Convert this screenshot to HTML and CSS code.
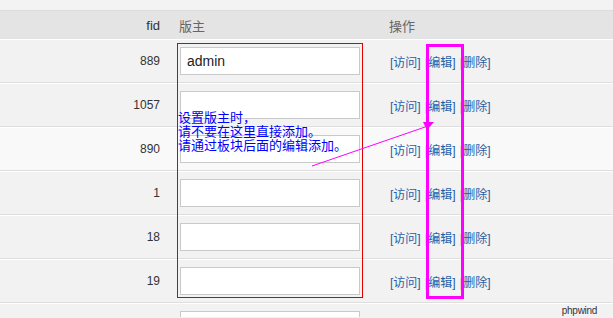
FILE: index.html
```html
<!DOCTYPE html>
<html lang="zh-CN">
<head>
  <meta charset="UTF-8" />
  <title>版主管理</title>
  <link rel="stylesheet" href="styles.css">
</head>
<body>
  <div class="top-band"></div>

  <div class="table">
    <div class="row head">
      <div class="cell num">fid</div>
      <div class="cell">版主</div>
      <div class="cell">操作</div>
    </div>

    <div class="row">
      <div class="cell num">889</div>
      <div class="cell"><input class="text-input" type="text" value="admin"></div>
      <div class="cell ops"><a href="#">[访问]</a> <a href="#">[编辑]</a> <a href="#">[删除]</a></div>
    </div>
    <div class="row">
      <div class="cell num">1057</div>
      <div class="cell"><input class="text-input" type="text"></div>
      <div class="cell ops"><a href="#">[访问]</a> <a href="#">[编辑]</a> <a href="#">[删除]</a></div>
    </div>
    <div class="row hover">
      <div class="cell num">890</div>
      <div class="cell"><input class="text-input" type="text"></div>
      <div class="cell ops"><a href="#">[访问]</a> <a href="#">[编辑]</a> <a href="#">[删除]</a></div>
    </div>
    <div class="row">
      <div class="cell num">1</div>
      <div class="cell"><input class="text-input" type="text"></div>
      <div class="cell ops"><a href="#">[访问]</a> <a href="#">[编辑]</a> <a href="#">[删除]</a></div>
    </div>
    <div class="row">
      <div class="cell num">18</div>
      <div class="cell"><input class="text-input" type="text"></div>
      <div class="cell ops"><a href="#">[访问]</a> <a href="#">[编辑]</a> <a href="#">[删除]</a></div>
    </div>
    <div class="row">
      <div class="cell num">19</div>
      <div class="cell"><input class="text-input" type="text"></div>
      <div class="cell ops"><a href="#">[访问]</a> <a href="#">[编辑]</a> <a href="#">[删除]</a></div>
    </div>
    <!-- next row, only its top edge is in view -->
    <div class="row partial">
      <div class="cell num"></div>
      <div class="cell"><input class="text-input" type="text"></div>
      <div class="cell"></div>
    </div>
  </div>

  <!-- annotations drawn over the screenshot -->
  <div class="mark-red"></div>
  <div class="mark-pink"></div>
  <div class="note">设置版主时，<br>请不要在这里直接添加。<br>请通过板块后面的编辑添加。</div>
  <svg class="arrow" width="613" height="318" viewBox="0 0 613 318">
    <line x1="312" y1="166" x2="428" y2="126" stroke="#ff00ff" stroke-width="1" />
    <polygon points="423,122 434,122 427,130" fill="#ff00ff" />
  </svg>
  <div class="watermark">phpwind</div>
</body>
</html>
```

FILE: styles.css
```css
* {
  margin: 0;
  padding: 0;
  box-sizing: border-box;
}

body {
  font-family: "Liberation Sans", Arial, "Noto Sans CJK SC", sans-serif;
  font-size: 12px;
  color: #333;
  background: #f2f2f2;
  width: 613px;
  height: 318px;
  overflow: hidden;
  position: relative;
}

.top-band {
  height: 11px;
  background: #f3f3f3;
  border-bottom: 1px solid #dcdcdc;
}

.row {
  display: grid;
  grid-template-columns: 160px 180px 1fr;
  column-gap: 20px;
  align-items: center;
  height: 44px;
  border-top: 1px solid #fff;
  border-bottom: 1px solid #dedede;
  background: #f2f2f2;
}

.row .cell:last-child {
  padding-left: 10px;
}

.row.head {
  height: 28px;
  border-top: none;
  border-bottom: none;
  background: #e4e4e4;
  color: #666;
  font-size: 13px;
}

.row.head .cell:nth-child(2) {
  margin-left: -1px;
}

.row.head .cell:last-child {
  padding-left: 9px;
}

.row.hover {
  background: #f9f9f9;
}

.row.partial {
  height: 14px;
  align-items: start;
  padding-top: 7px;
  border-bottom: none;
  overflow: hidden;
}

.num {
  text-align: right;
  color: #333;
}

.text-input {
  display: block;
  width: 180px;
  height: 28px;
  border: 1px solid #c9c9c9;
  background: #fff;
  padding: 0 6px;
  font-family: "Liberation Sans", Arial, sans-serif;
  font-size: 14px;
  color: #222;
  outline: none;
}

.ops a {
  color: #1f5fa8;
  text-decoration: none;
  margin-right: 1px;
}

.mark-red {
  position: absolute;
  left: 177px;
  top: 43px;
  width: 186px;
  height: 255px;
  border: 1px solid #e00000;
}

.mark-pink {
  position: absolute;
  left: 426px;
  top: 44px;
  width: 38px;
  height: 255px;
  border: 3px solid #ff00ff;
}

.note {
  position: absolute;
  left: 178px;
  top: 110px;
  font-family: "Noto Sans CJK SC", sans-serif;
  font-size: 13px;
  line-height: 14px;
  color: #0000ff;
  white-space: nowrap;
}

.arrow {
  position: absolute;
  left: 0;
  top: 0;
  pointer-events: none;
}

.watermark {
  position: absolute;
  right: 16px;
  bottom: 2px;
  font-family: "Liberation Sans", Arial, sans-serif;
  font-size: 10px;
  letter-spacing: -0.3px;
  color: #333;
}
```
